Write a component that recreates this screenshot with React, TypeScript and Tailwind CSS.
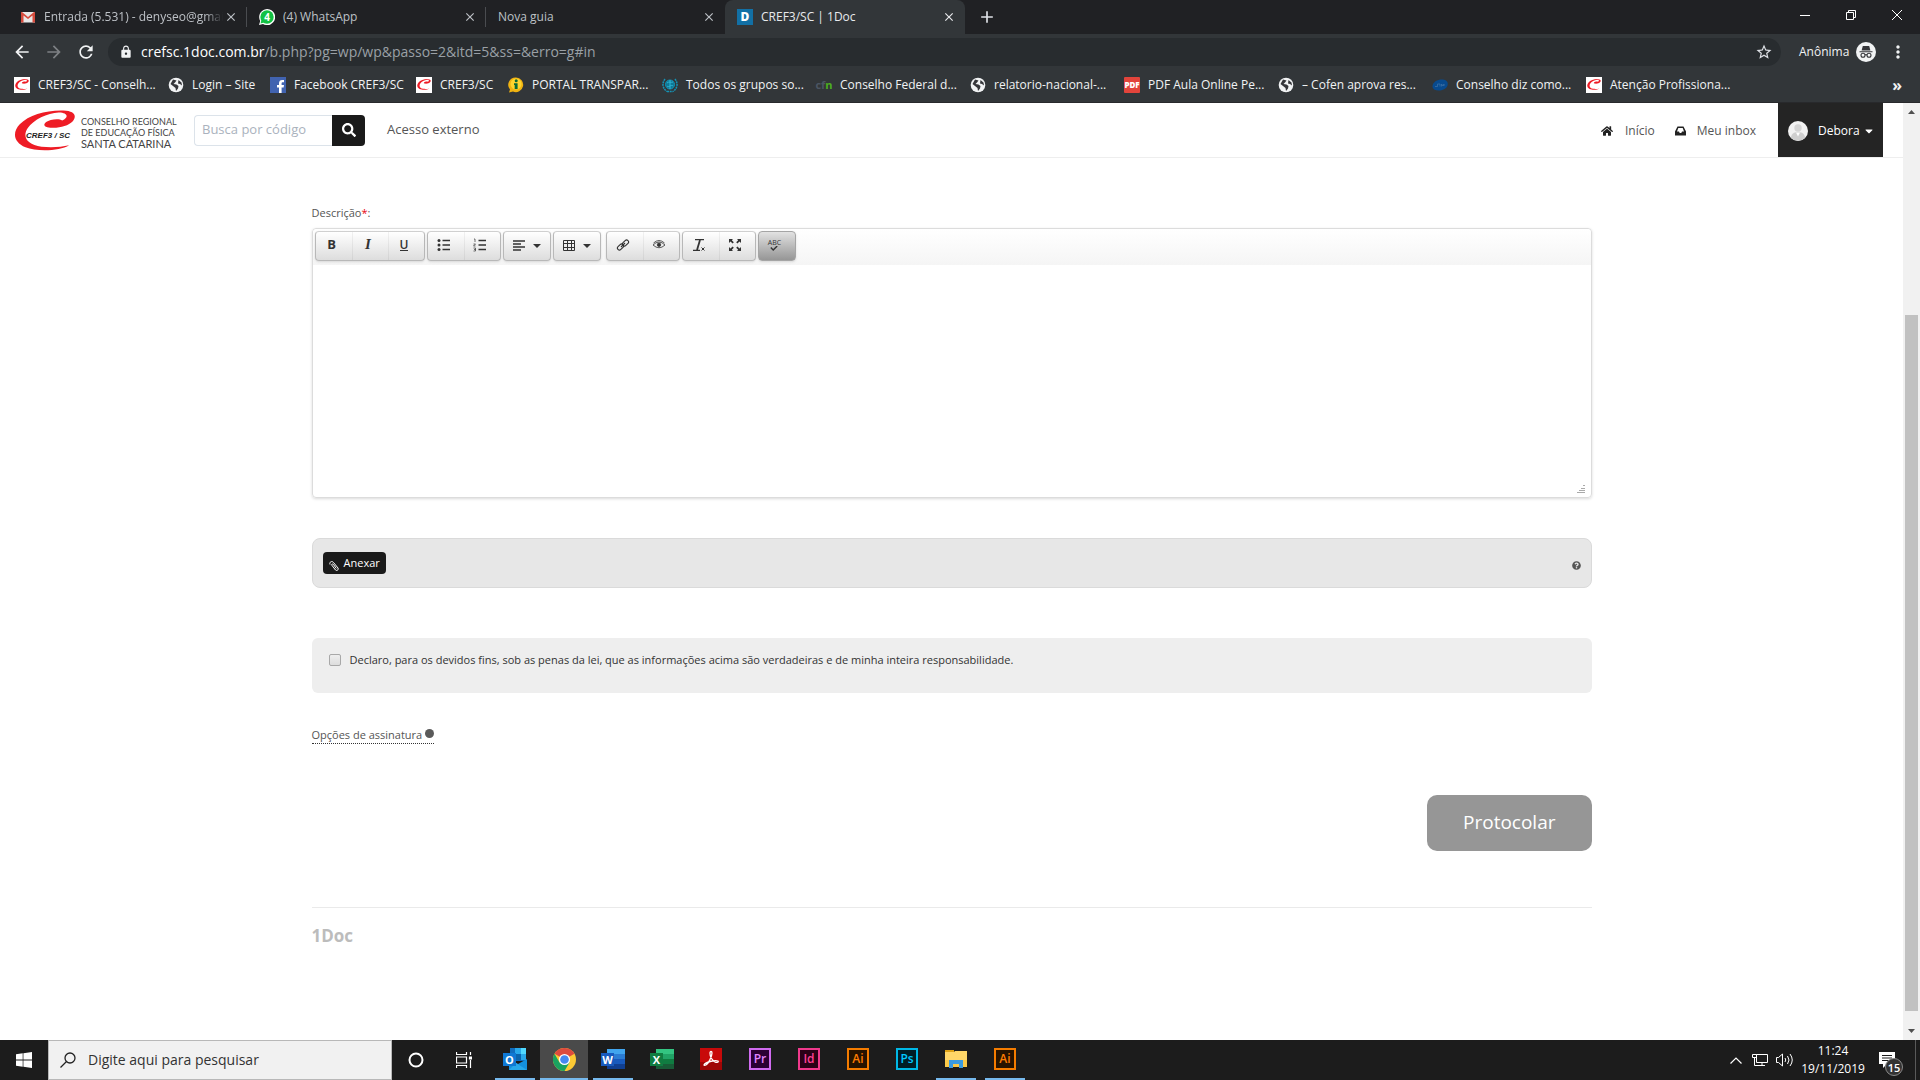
import React from 'react';
import {
    MdAdd,
    MdArrowBack,
    MdArrowForward,
    MdClose,
    MdLock,
    MdMoreVert,
    MdRefresh,
    MdStarBorder,
} from 'react-icons/md';
import { FaCaretDown, FaHome, FaQuestionCircle, FaSearch } from 'react-icons/fa';

interface IconProps {
    className?: string;
}

/* ---------- Favicons ---------- */

const GmailIcon = () => (
    <svg viewBox="0 0 16 16" className="size-4">
        <path d="M1 3h14v10.500H1z" fill="#e8e8e8" />
        <path d="M1 3h1l6 5 6-5h1v10.500h-2.500V6.600L8 10 3.500 6.600v6.900H1z" fill="#d54b3d" />
    </svg>
);

const WhatsIcon = () => (
    <span className="relative flex size-4 items-center justify-center">
        <svg viewBox="0 0 16 16" className="absolute inset-0 size-4">
            <path d="M0 16l1.200-4A8 8 0 1 1 4 14.900z" fill="#fff" />
            <circle cx="8" cy="8" r="6.700" fill="#12c143" />
            <path d="M1.500 14.500l1-3.500 2.500 2.500z" fill="#12c143" />
        </svg>
        <span className="relative text-[10px] leading-none font-bold text-white">4</span>
    </span>
);

const DocIcon = () => (
    <span className="flex size-4 items-center justify-center bg-[#1270a5] text-xs leading-none font-extrabold text-white">D</span>
);

const Swoosh: React.FC<IconProps> = ({ className }) => (
    <svg viewBox="0 0 54 43" preserveAspectRatio="none" className={className}>
        <path
            d="M48 37C40 43 20 44 10 39C0 34 -2 24 5 15C13 5 28 0 43 .5C53 1 55 6 51 12C47 17 37 20 29 18C24 16.500 27 12 32 10.500C36 9.500 40 9.500 42 11C48 8 47 2.500 39 2.500C29 3 17 10 12 19C7 28 11 36 24 38.500C32 39.500 41 39 48 37Z"
            fill="#ee1c25"
        />
    </svg>
);

const CrefIcon = () => (
    <span className="flex size-4 items-center justify-center bg-white">
        <Swoosh className="h-[11px] w-[14px]" />
    </span>
);

const GlobeIcon = () => (
    <svg viewBox="0 0 16 16" className="size-4">
        <circle cx="8" cy="8" r="7.300" fill="#f1f3f4" />
        <path d="M5 2.500l3.500 1L7 5.500 5.500 7l3 .5 2 1.500-.5 2.500-2 2.500-.5-3L5 9 2.500 7z" fill="#35363a" />
        <path d="M10.500 3l3 2.500.5 3-2-1.500-2-.5z" fill="#35363a" />
    </svg>
);

const FacebookIcon = () => (
    <svg viewBox="0 0 16 16" className="size-4">
        <path d="M0 0h16v16H0z" fill="#4163b0" />
        <path d="M9 16v-5.500H7V8h2V6.300C9 4.200 10.200 3 12.200 3H14v2.300h-1.200c-.9 0-1.200.4-1.200 1.200V8H14l-.4 2.500h-2V16z" fill="#fff" />
    </svg>
);

const InfoIcon = () => (
    <svg viewBox="0 0 16 16" className="size-4">
        <path d="M8 .5a7.300 7.300 0 1 1-3 14L1 15.500l1-3A7.300 7.300 0 0 1 8 .5z" fill="#f0b311" />
        <circle cx="8" cy="7" r="5.500" fill="#ffd52d" />
        <circle cx="8.200" cy="3.800" r="1.500" fill="#0b6b37" />
        <path d="M6 6.300h3.600V12H6.700V8H6z" fill="#0b6b37" />
    </svg>
);

const UnIcon = () => (
    <svg viewBox="0 0 16 16" className="size-4" fill="none" stroke="#1593b5">
        <circle cx="8" cy="7.500" r="4.500" fill="#0e7896" />
        <path d="M5 6c2-2 4 0 6-1M5 9c2 2 4-2 6 0M8 3v9" stroke="#2fb4d4" />
        <path d="M3 2C0 6 0 11 5 14.500M13 2c3 4 3 9-2 12.500M5 14.500h6" strokeWidth="1.500" strokeDasharray="2 .7" />
    </svg>
);

const CfnIcon = () => (
    <span className="flex size-4 items-center justify-center text-[11px] leading-none font-bold text-[#4b5563]">
        cf<span className="text-[#4caf1f]">n</span>
    </span>
);

const PdfIcon = () => (
    <span className="flex size-4 items-center justify-center rounded-[1px] bg-[#e2443b] text-[8px] leading-none font-extrabold text-white">PDF</span>
);

const CoreIcon = () => (
    <svg viewBox="0 0 16 16" className="size-4">
        <path d="M.5 10C0 5 6 2 11 2.500c4 .3 5.500 3 4.500 6-1 3.500-5 5-9 5-3 0-5.500-1-6-3.500z" fill="#084a8e" />
        <path d="M3 9.500h2.500V7H8v2.500M9.500 9.500V7l1.500 2 1-2v2" fill="none" stroke="#3b6ea5" strokeWidth=".8" />
    </svg>
);

const IncognitoIcon = () => (
    <svg viewBox="0 0 20 20" className="size-5">
        <circle cx="10" cy="10" r="10" fill="#f1f3f4" />
        <path d="M6.800 4h6.400l1.200 4.500H5.600zM3.500 9.200h13v1h-13z" fill="#35363a" />
        <g fill="none" stroke="#35363a" strokeWidth="1.100">
            <circle cx="7" cy="13.300" r="2" />
            <circle cx="13" cy="13.300" r="2" />
            <path d="M9 13q1-.7 2 0" />
        </g>
    </svg>
);

/* ---------- Browser ---------- */

const tabs = [
    { title: 'Entrada (5.531) - denyseo@gmail', icon: <GmailIcon />, fade: true },
    { title: '(4) WhatsApp', icon: <WhatsIcon /> },
    { title: 'Nova guia' },
    { title: 'CREF3/SC | 1Doc', icon: <DocIcon />, active: true },
];

const bookmarks = [
    { label: 'CREF3/SC - Conselh...', icon: <CrefIcon />, width: 'w-[154px]' },
    { label: 'Login – Site', icon: <GlobeIcon />, width: 'w-[102px]' },
    { label: 'Facebook CREF3/SC', icon: <FacebookIcon />, width: 'w-[146px]' },
    { label: 'CREF3/SC', icon: <CrefIcon />, width: 'w-[92px]' },
    { label: 'PORTAL TRANSPAR...', icon: <InfoIcon />, width: 'w-[154px]' },
    { label: 'Todos os grupos so...', icon: <UnIcon />, width: 'w-[154px]' },
    { label: 'Conselho Federal d...', icon: <CfnIcon />, width: 'w-[154px]' },
    { label: 'relatorio-nacional-...', icon: <GlobeIcon />, width: 'w-[154px]' },
    { label: 'PDF Aula Online Pe...', icon: <PdfIcon />, width: 'w-[154px]' },
    { label: '– Cofen aprova res...', icon: <GlobeIcon />, width: 'w-[154px]' },
    { label: 'Conselho diz como...', icon: <CoreIcon />, width: 'w-[154px]' },
    { label: 'Atenção Profissiona...', icon: <CrefIcon />, width: 'w-[154px]' },
];

const TabStrip = () => (
    <div className="flex h-[34px] items-stretch bg-[#202124] pl-2">
        {tabs.map((tab, i) => (
            <div
                key={tab.title}
                className={
                    tab.active
                        ? 'flex w-60 items-center rounded-t-lg bg-[#323639] pl-3 text-[#e8eaed]'
                        : 'flex w-[239px] items-center pl-3 text-[#bdc1c6]'
                }
            >
                {tab.icon && <span className="mr-2 shrink-0">{tab.icon}</span>}
                <span
                    className={
                        tab.fade
                            ? 'flex-1 overflow-hidden whitespace-nowrap [mask-image:linear-gradient(to_right,black_90%,transparent)]'
                            : 'flex-1 overflow-hidden whitespace-nowrap'
                    }
                >
                    {tab.title}
                </span>
                <button aria-label="Fechar guia" className="mr-2 ml-px">
                    <MdClose className="size-[14px]" />
                </button>
                <span className={i < 2 ? 'h-5 w-px bg-[#4a4c50]' : 'h-5 w-px'} />
            </div>
        ))}
        <button aria-label="Nova guia" className="ml-3 text-[#dee1e6]">
            <MdAdd className="size-5" />
        </button>
        <div className="ml-auto flex items-start text-white">
            <button aria-label="Minimizar" className="flex h-[30px] w-[46px] items-center justify-center">
                <svg viewBox="0 0 10 10" className="size-[10px]"><path d="M0 5.500h10" stroke="currentColor" /></svg>
            </button>
            <button aria-label="Restaurar" className="flex h-[30px] w-[46px] items-center justify-center">
                <svg viewBox="0 0 10 10" className="size-[10px]" fill="none" stroke="currentColor">
                    <path d="M.5 2.500h7v7h-7zM2.500 2.500v-2h7v7h-2" />
                </svg>
            </button>
            <button aria-label="Fechar" className="flex h-[30px] w-[46px] items-center justify-center">
                <svg viewBox="0 0 10 10" className="size-[10px]"><path d="M0 0l10 10M10 0L0 10" stroke="currentColor" /></svg>
            </button>
        </div>
    </div>
);

const AddressBar = () => (
    <div className="flex h-9 items-center bg-[#323639] text-[#f1f3f4]">
        <div className="flex w-[108px] items-center gap-3 pl-3">
            <button aria-label="Voltar"><MdArrowBack className="size-5" /></button>
            <button aria-label="Avançar" className="text-[#7d8084]"><MdArrowForward className="size-5" /></button>
            <button aria-label="Recarregar"><MdRefresh className="size-5" /></button>
        </div>
        <div className="flex h-7 flex-1 items-center rounded-full bg-[#282c2f] pr-2 pl-[11px]">
            <MdLock className="size-[14px]" />
            <p className="ml-2 flex-1 text-sm text-[#9aa0a6]">
                <span className="text-white">crefsc.1doc.com.br</span>/b.php?pg=wp/wp&amp;passo=2&amp;itd=5&amp;ss=&amp;erro=g#in
            </p>
            <button aria-label="Adicionar aos favoritos" className="text-[#dee1e6]"><MdStarBorder className="size-[18px]" /></button>
        </div>
        <div className="flex w-[139px] items-center pl-[18px]">
            <span className="flex-1">Anônima</span>
            <IncognitoIcon />
            <button aria-label="Menu" className="mx-3"><MdMoreVert className="size-5" /></button>
        </div>
    </div>
);

const BookmarksBar = () => (
    <nav className="flex h-[33px] items-center border-b border-[#28292c] bg-[#323639] pb-[3px] pl-[14px] text-[#f1f3f4]">
        {bookmarks.map((b, i) => (
            <a key={i} href="#" className={`flex items-center gap-2 whitespace-nowrap ${b.width}`}>
                {b.icon}
                {b.label}
            </a>
        ))}
        <button aria-label="Mais favoritos" className="mr-[18px] ml-auto text-base leading-5 font-bold">»</button>
    </nav>
);

/* ---------- Site header ---------- */

const Header = () => (
    <header className="flex h-[55px] items-center border-b border-[#eeeeee] pl-[14px] text-[#555555]">
        <a href="#" className="flex w-[154px] items-center gap-[5px]">
            <span className="relative shrink-0">
                <Swoosh className="h-[41px] w-[62px]" />
                <span className="absolute top-[22px] left-3 font-['Liberation_Sans',sans-serif] text-[8px] leading-none font-bold whitespace-nowrap text-[#222222] italic">CREF3 / SC</span>
            </span>
            <span className="flex flex-col pt-1 font-['Lato',sans-serif] text-[9px] leading-[11px] whitespace-nowrap text-[#444444]">
                <span>CONSELHO REGIONAL</span>
                <span>DE EDUCAÇÃO FÍSICA</span>
                <span className="text-[11px]">SANTA CATARINA</span>
            </span>
        </a>
        <form className="ml-[26px] flex h-[31px]" onSubmit={(e) => e.preventDefault()}>
            <input
                aria-label="Busca por código"
                placeholder="Busca por código"
                className="w-[138px] rounded-l border border-r-0 border-[#dce3ea] px-[7px] text-[13px] placeholder:text-[#aab2bd]"
            />
            <button aria-label="Buscar" className="flex w-[33px] items-center justify-center rounded-r bg-[#1a1a1a] text-white">
                <FaSearch className="size-[14px]" />
            </button>
        </form>
        <a href="#" className="ml-[22px] text-[13px]">Acesso externo</a>
        <nav className="mr-5 ml-auto flex h-full items-center">
            <a href="#" className="flex items-center gap-3 pt-[2px]">
                <FaHome className="size-3 text-[#222222]" />
                Início
            </a>
            <a href="#" className="mr-[22px] ml-5 flex items-center gap-[11px] pt-[2px]">
                <svg viewBox="0 0 11 10" className="w-[11px] text-[#222222]">
                    <path d="M2.500.5h6L11 5.500v4H0v-4zM3.300 2L2 5.500h2l.7 1.500h1.600L7 5.500h2L7.700 2z" fill="currentColor" fillRule="evenodd" />
                </svg>
                Meu inbox
            </a>
            <button className="flex h-full w-[105px] items-center bg-[#242424] pt-[2px] pl-[10px] text-white">
                <svg viewBox="0 0 20 20" className="mr-[10px] size-5">
                    <circle cx="10" cy="10" r="10" fill="#f2f2f2" />
                    <circle cx="10" cy="7" r="3.700" fill="#d4d4d4" />
                    <path d="M3 17c0-4 3-6 7-6s7 2 7 6a10 10 0 0 1-14 0z" fill="#cfcfcf" />
                    <path d="M8 11.500l2 4 2-4z" fill="#fff" />
                </svg>
                Debora
                <FaCaretDown className="ml-[3px] size-3" />
            </button>
        </nav>
    </header>
);

/* ---------- Editor ---------- */

const ListLines: React.FC<{ ordered?: boolean }> = ({ ordered }) => (
    <svg viewBox="0 0 14 14" className="size-[14px]">
        <path d="M5.500 2.500H13M5.500 7H13M5.500 11.500H13" stroke="currentColor" strokeWidth="1.600" />
        {ordered ? (
            <path d="M1 1h1v3M.5 6h2L.5 8h2M.5 10h2v3h-2M1 11.500h1.500" stroke="currentColor" strokeWidth=".7" fill="none" />
        ) : (
            <g fill="currentColor">
                <circle cx="2" cy="2.500" r="1.500" />
                <circle cx="2" cy="7" r="1.500" />
                <circle cx="2" cy="11.500" r="1.500" />
            </g>
        )}
    </svg>
);

const AlignIcon = () => (
    <svg viewBox="0 0 14 14" className="size-[14px]" stroke="currentColor" strokeWidth="1.600">
        <path d="M1 2h12M1 5h8M1 8h12M1 11h8" />
    </svg>
);

const TableIcon = () => (
    <svg viewBox="0 0 14 14" className="size-[14px]" fill="none" stroke="currentColor">
        <path d="M1.500 1.500h11v10h-11zM1.500 4.500h11M1.500 8.500h11M5.500 1.500v10M9.500 1.500v10" />
    </svg>
);

const LinkIcon = () => (
    <svg viewBox="0 0 14 14" className="size-[14px]" fill="none" stroke="currentColor" strokeWidth="1.100">
        <rect x="1" y="7" width="7" height="4" rx="2" transform="rotate(-45 4.500 9)" />
        <rect x="6" y="3" width="7" height="4" rx="2" transform="rotate(-45 9.500 5)" />
        <path d="M5 9l4-4" />
    </svg>
);

const EyeIcon = () => (
    <svg viewBox="0 0 14 14" className="size-[14px]" fill="none" stroke="currentColor" strokeWidth=".8">
        <path d="M1 7q6-6 12 0-6 5.500-12 0zM1.500 5q5.500-5 11 0" />
        <circle cx="7" cy="6.800" r="1.700" fill="currentColor" />
    </svg>
);

const ClearIcon = () => (
    <svg viewBox="0 0 14 14" className="size-[14px]" fill="none" stroke="currentColor">
        <path d="M3 1.700h9M1 12.300h7" strokeWidth="1.300" />
        <path d="M8 2L5 12" strokeWidth="1.800" />
        <path d="M9.500 9.500l3 3M12.500 9.500l-3 3" />
    </svg>
);

const ExpandIcon = () => (
    <svg viewBox="0 0 14 14" className="size-[14px]" fill="currentColor">
        <path d="M1 1h4L3.800 2.200l2 2.100-1.200 1.200-2.100-2L1 5zM13 1H9l1.200 1.200-2 2.100 1.200 1.200 2.100-2L13 5zM1 13h4l-1.200-1.200 2-2.100-1.200-1.200-2.100 2L1 9zM13 13H9l1.200-1.200-2-2.100 1.200-1.200 2.100 2L13 9z" />
    </svg>
);

const SpellIcon = () => (
    <span className="flex flex-col items-center pb-[2px]">
        <span className="text-[7px] leading-[7px]">ABC</span>
        <svg viewBox="0 0 10 6" className="w-2" fill="none" stroke="currentColor" strokeWidth="1.800">
            <path d="M1 2l3 3 5-5" />
        </svg>
    </span>
);

const groupStyle = 'flex h-[30px] overflow-hidden rounded-sm border border-[#b8b8b8] border-t-[#d0d0d0] bg-linear-to-b from-white to-[#dddddd] shadow-sm';

const ToolGroup: React.FC<{ tools: { name: string; icon: React.ReactNode }[] }> = ({ tools }) => (
    <div className={groupStyle}>
        {tools.map((t) => (
            <button
                key={t.name}
                type="button"
                aria-label={t.name}
                className="flex w-9 items-center justify-center border-l border-black/5 pr-1 pb-[2px] first:border-l-0"
            >
                {t.icon}
            </button>
        ))}
    </div>
);

const ToolMenu: React.FC<{ name: string; children: React.ReactNode }> = ({ name, children }) => (
    <button type="button" aria-label={name} className={`${groupStyle} w-12 items-center gap-[7px] pl-2`}>
        {children}
        <svg viewBox="0 0 8 4" className="w-2"><path d="M0 0h8L4 4z" fill="currentColor" /></svg>
    </button>
);

const Editor = () => (
    <div className="rounded border border-[#dcdcdc] shadow-[0_1px_3px_rgba(0,0,0,0.15)]">
        <div className="flex gap-[2px] rounded-t bg-linear-to-b from-white to-[#f5f5f5] px-[2px] pt-[2px] pb-1 text-[#333333]">
            <ToolGroup
                tools={[
                    { name: 'Negrito', icon: <b className="text-[13px]">B</b> },
                    { name: 'Itálico', icon: <i className="font-['Liberation_Serif',serif] text-[15px] font-bold">I</i> },
                    { name: 'Sublinhado', icon: <span className="border-b border-current text-xs leading-[11px] font-semibold">U</span> },
                ]}
            />
            <ToolGroup
                tools={[
                    { name: 'Lista', icon: <ListLines /> },
                    { name: 'Lista numerada', icon: <ListLines ordered /> },
                ]}
            />
            <ToolMenu name="Alinhamento"><AlignIcon /></ToolMenu>
            <ToolMenu name="Tabela"><TableIcon /></ToolMenu>
            <span className="w-px" />
            <ToolGroup
                tools={[
                    { name: 'Link', icon: <LinkIcon /> },
                    { name: 'Visualizar', icon: <EyeIcon /> },
                ]}
            />
            <ToolGroup
                tools={[
                    { name: 'Limpar formatação', icon: <ClearIcon /> },
                    { name: 'Tela cheia', icon: <ExpandIcon /> },
                ]}
            />
            <button
                type="button"
                aria-label="Corretor ortográfico"
                className="flex h-[30px] w-[38px] items-center justify-center rounded-sm border border-[#a5a5a5] bg-linear-to-b from-[#e2e2e2] to-[#969696] pr-1 shadow-sm"
            >
                <SpellIcon />
            </button>
        </div>
        <div className="relative">
            <textarea id="descricao" className="block h-[232px] w-full resize-none px-2 py-1 outline-none" />
            <svg viewBox="0 0 8 8" className="absolute right-[6px] bottom-1 size-2" fill="#aaaaaa">
                <path d="M6 0h2v1H6zM4 3h4v1H4zM2 5h6v1H2zM0 7h8v1H0z" />
            </svg>
        </div>
    </div>
);

const Form = () => (
    <form className="mx-auto w-full max-w-[1280px] pt-[47px] text-[11px]" onSubmit={(e) => e.preventDefault()}>
        <label htmlFor="descricao" className="mb-[7px] block leading-4">
            Descrição<span className="text-red-600">*</span>:
        </label>
        <Editor />

        <div className="mt-10 flex h-[50px] items-center justify-between rounded-lg border border-[#dadada] bg-[#e7e7e7] px-[10px]">
            <button type="button" className="flex h-[22px] items-center gap-[5px] rounded-sm bg-[#1a1a1a] px-[6px] text-white">
                <svg viewBox="0 0 10 11" className="mt-1 w-[10px]" fill="none" stroke="currentColor">
                    <path d="M1 4.500C0 2 3 .5 4.500 2.500L9 8c1 2-1.500 3.300-2.500 2L2.800 5.200C2.300 4 3.800 3.500 4.300 4.300L7.300 8.500" />
                </svg>
                Anexar
            </button>
            <FaQuestionCircle className="mt-1 size-[9px]" />
        </div>

        <div className="mt-[50px] flex h-[55px] items-start gap-[9px] rounded-md bg-[#eeeeee] px-[17px] pt-[14px] text-[#333333]">
            <input
                id="declaro"
                type="checkbox"
                className="mt-[2px] size-3 appearance-none rounded-xs border border-[#a8a8a8] bg-linear-to-b from-[#eeeeee] to-[#dddddd]"
            />
            <label htmlFor="declaro" className="leading-4">
                Declaro, para os devidos fins, sob as penas da lei, que as informações acima são verdadeiras e de minha inteira responsabilidade.
            </label>
        </div>

        <a href="#" className="mt-[34px] inline-flex gap-[3px] border-b border-dotted border-[#333333] leading-4">
            Opções de assinatura
            <span className="mt-[2px] size-[9px] rounded-full bg-[#5a5a5a]" />
        </a>

        <div className="mt-[51px] flex justify-end">
            <button className="h-14 rounded-[10px] bg-[#969696] px-9 text-[19px] text-white">Protocolar</button>
        </div>

        <footer className="mt-14 border-t border-[#eaeaea] pt-[18px]">
            <span className="text-[17px] leading-5 font-bold text-[#bcbcbc]">1Doc</span>
        </footer>
    </form>
);

const Scrollbar = () => (
    <div className="flex w-[17px] shrink-0 flex-col items-center justify-between bg-[#f1f1f1] py-[7px]" aria-hidden="true">
        <svg viewBox="0 0 7 4" className="w-[7px]"><path d="M0 4L3.500 0 7 4z" fill="#505050" /></svg>
        <div className="mt-auto mb-[18px] h-[75.400%] w-[13px] bg-[#c1c1c1]" />
        <svg viewBox="0 0 7 4" className="w-[7px]"><path d="M0 0h7L3.500 4z" fill="#505050" /></svg>
    </div>
);

/* ---------- Taskbar ---------- */

const OfficeIcon: React.FC<{ letter: string; colors: string[] }> = ({ letter, colors }) => (
    <span className="relative flex h-[22px] w-6 items-center">
        <svg viewBox="0 0 24 22" className="absolute inset-0">
            <path d="M6 1h18v5H6z" fill={colors[0]} />
            <path d="M6 6h18v5H6z" fill={colors[1]} />
            <path d="M6 11h18v5H6z" fill={colors[2]} />
            <path d="M6 16h18v5H6z" fill={colors[3]} />
            <path d="M0 5h13v13H0z" fill={colors[4]} />
        </svg>
        <span className="relative w-[13px] text-center text-[11px] leading-none font-bold text-white">{letter}</span>
    </span>
);

const OutlookIcon = () => (
    <span className="relative flex h-[22px] w-6 items-center">
        <svg viewBox="0 0 24 22" className="absolute inset-0">
            <path d="M7 0h16v13H7z" fill="#0f6cbd" />
            <path d="M12 0h6v6h-6z" fill="#28a8ea" />
            <path d="M18 0h5v6h-5z" fill="#50d9ff" />
            <path d="M12 6h6v6h-6z" fill="#0a64ad" />
            <path d="M18 6h5v6h-5z" fill="#28a8ea" />
            <path d="M6 11l9 5 9-5v11H6z" fill="#1490df" />
            <path d="M6 22h18L13 15z" fill="#28a8ea" />
            <path d="M0 5h13v13H0z" fill="#0f78d4" />
        </svg>
        <span className="relative w-[13px] text-center text-[11px] leading-none font-bold text-white">O</span>
    </span>
);

const ChromeIcon = () => (
    <svg viewBox="0 0 24 24" className="size-[23px]">
        <circle cx="12" cy="12" r="12" fill="#fcc934" />
        <path d="M12 12L1.600 6A12 12 0 0 1 22.400 6z" fill="#dd4b3e" />
        <path d="M12 12h0l5.200 3L12 24A12 12 0 0 1 1.600 6l5.200 9z" fill="#1aa260" />
        <circle cx="12" cy="12" r="5.800" fill="#fff" />
        <circle cx="12" cy="12" r="4.500" fill="#4688f1" />
    </svg>
);

const AcrobatIcon = () => (
    <svg viewBox="0 0 22 22" className="size-[22px]">
        <path d="M0 0h22v22H0z" fill="#c80a0a" />
        <path d="M0 14h22v8H0z" fill="#a00606" />
        <path d="M4 17c1-3 11-5 14-4 1 1-1 2-3 1-3-2-5-6-5-9 0-2 2-2 2 0 0 4-4 11-6 12-1 .5-2 .5-2 0z" fill="none" stroke="#fff" strokeWidth="1.300" />
    </svg>
);

const FolderIcon = () => (
    <svg viewBox="0 0 22 20" className="w-[22px]">
        <path d="M0 1h9v4H0z" fill="#e0a315" />
        <path d="M0 3h9l1-1h12v16H0z" fill="#ffd668" />
        <path d="M0 11h22v7H0z" fill="#fac948" />
        <path d="M4 19v-8h14v8h-4v-4H8v4z" fill="#3a9be0" />
    </svg>
);

const AdobeIcon: React.FC<{ label: string; tone: string }> = ({ label, tone }) => (
    <span className={`flex size-[22px] items-center justify-center border-2 text-xs leading-none font-semibold ${tone}`}>{label}</span>
);

const aiTone = 'border-[#f57c00] bg-[#261300] text-[#ff7c00]';

const apps = [
    { name: 'Outlook', icon: <OutlookIcon />, open: true },
    { name: 'Chrome', icon: <ChromeIcon />, open: true, active: true },
    { name: 'Word', icon: <OfficeIcon letter="W" colors={['#41a5ee', '#2b7cd3', '#185abd', '#103f91', '#185abd']} />, open: true },
    { name: 'Excel', icon: <OfficeIcon letter="X" colors={['#33c481', '#21a366', '#107c41', '#185c37', '#107c41']} /> },
    { name: 'Acrobat', icon: <AcrobatIcon /> },
    { name: 'Premiere', icon: <AdobeIcon label="Pr" tone="border-[#d06bf0] bg-[#2a0034] text-[#e085ff]" /> },
    { name: 'InDesign', icon: <AdobeIcon label="Id" tone="border-[#f0398c] bg-[#2b0117] text-[#ff3f93]" /> },
    { name: 'Illustrator', icon: <AdobeIcon label="Ai" tone={aiTone} /> },
    { name: 'Photoshop', icon: <AdobeIcon label="Ps" tone="border-[#00b8e6] bg-[#001d26] text-[#00c8ff]" /> },
    { name: 'Explorador', icon: <FolderIcon />, open: true },
    { name: 'Illustrator CC', icon: <AdobeIcon label="Ai" tone={aiTone} />, open: true },
];

const Taskbar = () => (
    <footer className="flex h-10 items-stretch bg-[#1c1c1c] text-white">
        <button aria-label="Iniciar" className="flex w-12 items-center justify-center">
            <svg viewBox="0 0 16 16" className="size-4" fill="#fff">
                <path d="M0 2.200l6.700-.9v6.300H0zM7.400 1.200L16 0v7.600H7.400zM0 8.400h6.700v6.300L0 13.800zM7.400 8.400H16V16l-8.600-1.200z" />
            </svg>
        </button>
        <label className="flex w-[344px] items-center gap-3 border border-[#b8b8b8] bg-[#f1f1f1] pl-[11px] text-[#333333]">
            <svg viewBox="0 0 16 16" className="size-4" fill="none" stroke="#222222" strokeWidth="1.300">
                <circle cx="10" cy="6" r="5" />
                <path d="M6.500 9.500L.5 15.500" />
            </svg>
            <input aria-label="Pesquisar" placeholder="Digite aqui para pesquisar" className="flex-1 text-sm outline-none placeholder:text-[#333333]" />
        </label>
        <button aria-label="Cortana" className="flex w-12 items-center justify-center">
            <svg viewBox="0 0 16 16" className="size-4"><circle cx="8" cy="8" r="6.500" fill="none" stroke="#fff" strokeWidth="2" /></svg>
        </button>
        <button aria-label="Visão de tarefas" className="mr-[3px] flex w-12 items-center justify-center">
            <svg viewBox="0 0 16 16" className="size-4" fill="none" stroke="#fff" strokeWidth="1.200">
                <path d="M.5 0v2.500h10V0M.5 16v-2.500h10V16M.5 5h10v6H.5zM14.500 0v3M14.500 8v8" />
                <path d="M13.500 5h2v2h-2z" fill="#fff" />
            </svg>
        </button>
        <div className="flex gap-px">
            {apps.map((app) => (
                <button
                    key={app.name}
                    aria-label={app.name}
                    className={app.active ? 'flex w-12 flex-col items-center bg-[#4a4a4a]' : 'flex w-12 flex-col items-center'}
                >
                    <span className="flex flex-1 items-center">{app.icon}</span>
                    <span className={`h-[2px] ${app.active ? 'w-full bg-[#76b9ed]' : app.open ? 'w-10 bg-[#76b9ed]' : ''}`} />
                </button>
            ))}
        </div>
        <div className="ml-auto flex items-center">
            <svg viewBox="0 0 12 7" className="w-3" fill="none" stroke="#fff" strokeWidth="1.200"><path d="M.5 6.500L6 1l5.500 5.500" /></svg>
            <svg viewBox="0 0 16 14" className="ml-[10px] w-4" fill="none" stroke="#fff">
                <path d="M4.500 1.500h11v8h-11zM10 9.500v3M6 12.500h7M.5 1.500h4v3h-4zM2.500 4.500v8h4" />
            </svg>
            <svg viewBox="0 0 18 14" className="ml-2 w-[18px]" fill="none" stroke="#fff">
                <path d="M.5 4.500h2L6.500 1v12l-4-3.500h-2zM9 5q1.500 2 0 4M11.500 3q3 4 0 8M14 1q4.500 6 0 12" />
            </svg>
            <div className="mx-2 flex w-[62px] flex-col items-center text-xs leading-[18px]">
                <span>11:24</span>
                <span>19/11/2019</span>
            </div>
            <button aria-label="Notificações" className="relative mr-3 ml-[3px] h-10 w-7">
                <svg viewBox="0 0 16 16" className="absolute top-3 left-1 size-4">
                    <path d="M0 0h16v12H8l-4 4v-4H0z" fill="#fff" />
                    <path d="M3 3.500h10M3 6h10M3 8.500h10" stroke="#1c1c1c" />
                </svg>
                <span className="absolute top-[18px] left-[10px] flex size-[18px] items-center justify-center rounded-full border border-[#8a8a8a] bg-[#333333] text-[11px] leading-none font-semibold">15</span>
            </button>
            <span className="mr-1 h-full w-px bg-[#5a5a5a]" />
        </div>
    </footer>
);

const App: React.FC = () => (
    <div className="flex min-h-screen flex-col bg-white font-['Open_Sans',sans-serif] text-xs text-[#555555]">
        <TabStrip />
        <AddressBar />
        <BookmarksBar />
        <div className="flex flex-1">
            <main className="flex-1">
                <Header />
                <Form />
            </main>
            <Scrollbar />
        </div>
        <Taskbar />
    </div>
);

export default App;
